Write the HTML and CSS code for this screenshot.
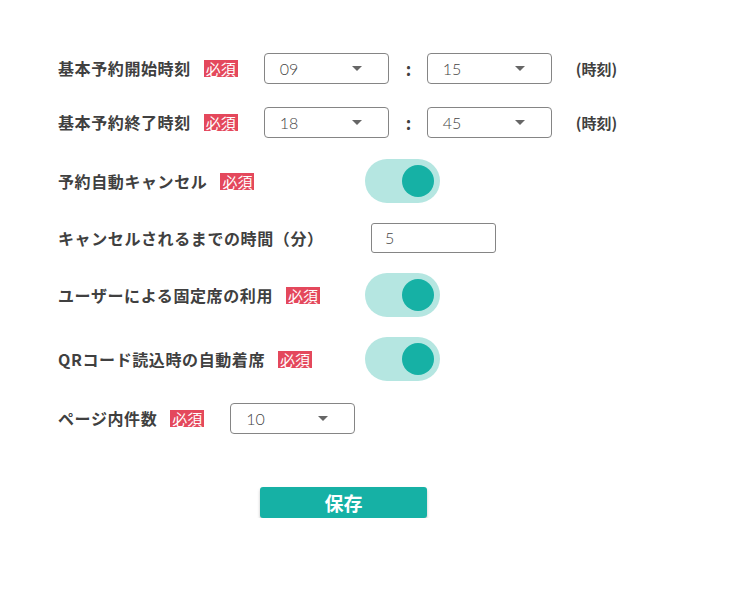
FILE: index.html
```html
<!DOCTYPE html>
<html lang="ja">
<head>
    <meta charset="UTF-8">
    <meta name="viewport" content="width=device-width, initial-scale=1.0">
    <title>予約設定</title>
    <link rel="stylesheet" href="styles.css">
</head>
<body>

    <div id="settings">
        <!-- 開始時刻 -->
        <div class="row row-select">
            <span class="label">基本予約開始時刻</span>
            <span class="required">必須</span>
            <div class="select">09<span class="arrow"></span></div>
            <span class="colon">:</span>
            <div class="select">15<span class="arrow"></span></div>
            <span class="unit">(時刻)</span>
        </div>

        <!-- 終了時刻 -->
        <div class="row row-select">
            <span class="label">基本予約終了時刻</span>
            <span class="required">必須</span>
            <div class="select">18<span class="arrow"></span></div>
            <span class="colon">:</span>
            <div class="select">45<span class="arrow"></span></div>
            <span class="unit">(時刻)</span>
        </div>

        <div class="row row-toggle">
            <div class="label-group">
                <span class="label">予約自動キャンセル</span>
                <span class="required">必須</span>
            </div>
            <div class="toggle"><span class="knob"></span></div>
        </div>

        <div class="row row-input">
            <div class="label-group wide">
                <span class="label">キャンセルされるまでの時間（分）</span>
            </div>
            <div class="text-input">5</div>
        </div>

        <div class="row row-toggle">
            <div class="label-group">
                <span class="label">ユーザーによる固定席の利用</span>
                <span class="required">必須</span>
            </div>
            <div class="toggle"><span class="knob"></span></div>
        </div>

        <div class="row row-toggle">
            <div class="label-group">
                <span class="label">QRコード読込時の自動着席</span>
                <span class="required">必須</span>
            </div>
            <div class="toggle"><span class="knob"></span></div>
        </div>

        <div class="row row-select">
            <span class="label">ページ内件数</span>
            <span class="required">必須</span>
            <div class="select">10<span class="arrow"></span></div>
        </div>

        <button class="save">保存</button>
    </div>

</body>
</html>
```

FILE: styles.css
```css
body {
    margin: 0;
    padding: 0;
    background-color: #fff;
    font-family: "Noto Sans CJK JP", "Noto Sans", sans-serif;
    color: #404040;
}

#settings {
    display: flex;
    flex-direction: column;
    gap: 20px;
    padding: 51px 0 0 58px;
}

.row {
    display: flex;
    align-items: center;
}

.row-select {
    height: 34px;
}

.row-toggle {
    height: 44px;
}

.row-input {
    height: 30px;
}

.label {
    font-size: 16px;
    font-weight: bold;
    letter-spacing: 0.6px;
}

.label-group {
    display: flex;
    align-items: center;
    width: 307px;
}

.label-group.wide {
    width: 313px;
}

.required {
    background-color: #e4485c;
    color: #fff;
    font-size: 15px;
    line-height: 17px;
    height: 17px;
    padding: 0 2px;
    margin-left: 13px;
}

.row-select .required {
    margin-right: 26px;
}

/* セレクトボックス風 */
.select {
    position: relative;
    box-sizing: border-box;
    width: 125px;
    height: 31px;
    border: 1px solid #858585;
    border-radius: 4px;
    padding-left: 15px;
    font-family: Lato, sans-serif;
    font-weight: 300;
    font-size: 16px;
    line-height: 29px;
    color: #444;
}

.arrow {
    position: absolute;
    right: 26px;
    top: 12px;
    width: 0;
    height: 0;
    border-left: 5px solid transparent;
    border-right: 5px solid transparent;
    border-top: 5px solid #666;
}

.colon {
    font-weight: bold;
    font-size: 17px;
    margin: 0 16px 0 17px;
    width: 5px;
}

.unit {
    font-size: 15px;
    font-weight: bold;
    margin-left: 24px;
}

.toggle {
    box-sizing: border-box;
    display: flex;
    justify-content: flex-end;
    align-items: center;
    width: 75px;
    height: 44px;
    padding-right: 6px;
    border-radius: 22px;
    background-color: #b5e6e1;
}

.knob {
    width: 32px;
    height: 32px;
    border-radius: 50%;
    background-color: #16b1a5;
}

.text-input {
    box-sizing: border-box;
    width: 125px;
    height: 30px;
    border: 1px solid #858585;
    border-radius: 3px;
    padding-left: 13px;
    font-family: Lato, sans-serif;
    font-weight: 300;
    font-size: 16px;
    line-height: 28px;
    color: #444;
}

.save {
    align-self: flex-start;
    margin: 32px 0 0 202px;
    width: 167px;
    height: 31px;
    border: none;
    border-radius: 3px;
    background-color: #16b1a5;
    color: #fff;
    font-family: "Noto Sans CJK JP", sans-serif;
    font-size: 19px;
    font-weight: bold;
    line-height: 31px;
    padding: 0;
    box-shadow: 0 2px 3px rgba(0, 0, 0, 0.25);
    cursor: pointer;
}
```
